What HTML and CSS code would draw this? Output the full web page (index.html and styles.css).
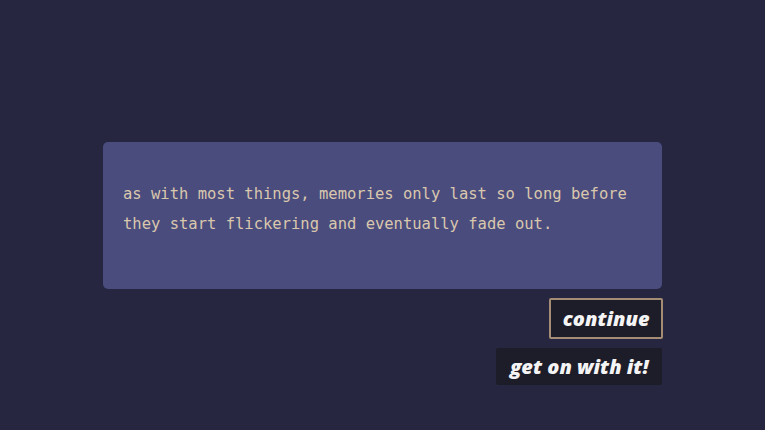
FILE: index.html
```html
<!DOCTYPE html>
<html lang="en">
<head>
    <meta charset="UTF-8">
    <meta name="viewport" content="width=device-width, initial-scale=1.0">
    <title>Memories</title>
    <link rel="stylesheet" href="styles.css">
</head>
<body>
    <div class="scene">
        <div class="dialogue">
            <p class="dialogue-text">as with most things, memories only last so long before they start flickering and eventually fade out.</p>
        </div>
        <div class="choices">
            <button class="choice selected">continue</button>
            <button class="choice">get on with it!</button>
        </div>
    </div>
</body>
</html>
```

FILE: styles.css
```css
html, body {
    height: 100%;
}
body {
    margin: 0;
    padding: 0;
    background-color: #262641;
    font-family: "DejaVu Sans Mono", monospace;
}
.scene {
    width: 559px;
    margin: 0 auto;
    padding-top: 142px;
}
.dialogue {
    height: 147px;
    box-sizing: border-box;
    padding: 37px 20px 0 20px;
    background-color: #4a4c7d;
    border-radius: 5px;
}
.dialogue-text {
    margin: 0;
    color: #d9c7ae;
    font-size: 15.5px;
    line-height: 30px;
}
.choices {
    display: flex;
    flex-direction: column;
    align-items: flex-end;
    gap: 9px;
    margin-top: 9px;
}
.choice {
    font-family: "Open Sans", sans-serif;
    font-weight: 800;
    font-style: italic;
    font-size: 20px;
    line-height: 27px;
    color: #f4f4f4;
    background-color: #1d1d29;
    border: none;
    border-radius: 2px;
    padding: 5px 13.5px;
    cursor: pointer;
}
.choice.selected {
    border: 2px solid #a48d74;
    padding: 5px 11.5px;
    margin-right: -1px;
}
```
